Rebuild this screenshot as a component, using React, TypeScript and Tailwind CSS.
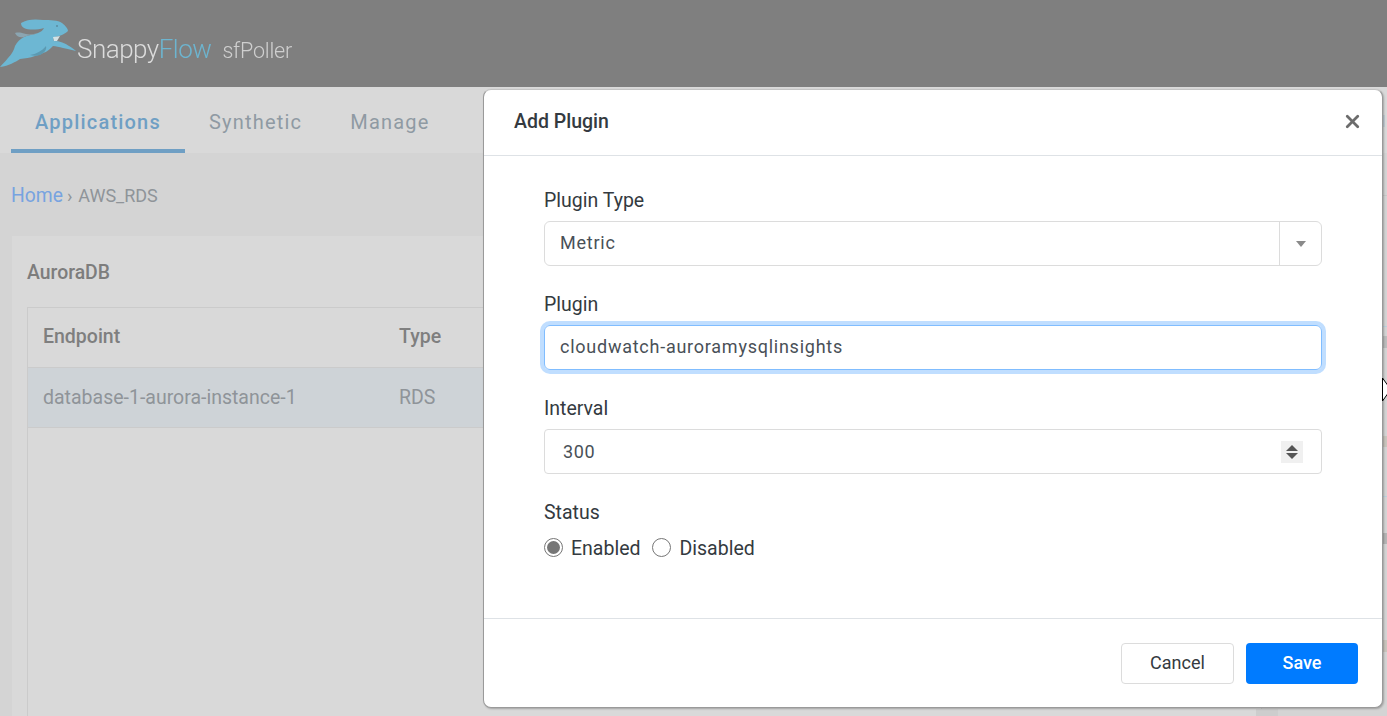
import { X } from "lucide-react";

function Logo() {
  return (
    <div className="flex items-end">
      <svg width="80" height="70" viewBox="0 0 80 70" className="shrink-0 blur-[0.5px]">
        <path d="M21 23 C27 19 36 19 43 20 C50 20 58 20 62 23 C66 26 68 29 68 31 C66 33 61 36 55 37 C53 38 53 40 54 41 C60 41 65 43 69 46 C72 48 74 49 76 51 C72 50 68 49 63 48 C59 47 56 46 53 46 C50 49 47 52 43 53 C40 55 37 55 35 56 C30 58 25 58 20 59 C15 62 9 66 0 67 C2 64 5 62 8 58 C12 54 14 50 15 46 C17 42 20 39 24 37 C28 35 33 35 38 33 C41 32 43 30 44 28 C37 30 28 30 24 28 C22 27 21 25 21 23 Z" fill="#6db7d3" />
        <path d="M15 33 C19 32 22 33 26 34 C30 35 34 34 38 33 C33 35 28 35 24 37 C20 38 17 37 15 33 Z" fill="#8ba5b1" />
        <path d="M30 55 C36 54 42 51 46 46 C47 50 44 53 40 55 C37 56 33 56 30 55 Z" fill="#5c9ab2" />
        <path d="M53 37 C56 37 59 36 60 36 L57 41 L54 41 Z" fill="#d4e2e5" />
        <circle cx="57" cy="26" r="0.8" fill="#4c6f7e" />
      </svg>
      <span className="font-light text-[26px] leading-none tracking-[-0.5px] text-[#dcdcdc] ml-[-3px] mb-[8px] blur-[0.3px]">
        Snappy<span className="text-[#6db5d0]">Flow</span>
      </span>
      <span className="font-light text-[21.5px] leading-none tracking-[-0.2px] text-[#cfcfcf] ml-[11px] mb-[9px] blur-[0.3px]">
        sfPoller
      </span>
    </div>
  );
}

function Field({ label, children }: { label: string; children: React.ReactNode }) {
  return (
    <div className="h-[104px]">
      <div className="text-[19.5px] leading-[24px] text-[#343a40] pt-[2px] h-[34px]">{label}</div>
      {children}
    </div>
  );
}

export default function App() {
  return (
    <div className="relative w-[1387px] h-[716px] overflow-hidden bg-[#d4d4d4] font-['Roboto',sans-serif]">
      <header className="h-[87px] bg-[#7f7f7f] flex items-end">
        <div className="pb-[17px]">
          <Logo />
        </div>
      </header>

      <nav className="h-[66px] bg-[#d9d9d9] flex items-end pl-[11px] text-[20px] tracking-[1.2px] text-[#8f9aa3]">
        <div className="w-[174px] h-[66px] pt-[22px] leading-[26px] text-center font-medium text-[#6f9fc4] border-b-4 border-[#6f9fc4]">
          Applications
        </div>
        <div className="h-[66px] pt-[22px] leading-[26px] ml-[24px]">Synthetic</div>
        <div className="h-[66px] pt-[22px] leading-[26px] ml-[48px]">Manage</div>
      </nav>

      <div className="h-[83px] pl-[11px] pt-[31px] text-[19.3px] leading-[24px] text-[#8f9499] flex">
        <span className="text-[#77a3e0]">Home</span>
        <span className="ml-[4px] mr-[6px] text-[18px]">›</span>
        <span className="text-[18px]">AWS_RDS</span>
      </div>

      <section className="ml-[12px] w-[1250px] h-[480px] overflow-hidden bg-[#d9d9d9] pl-[15px]">
        <h2 className="h-[71px] pt-[24px] text-[19.4px] leading-[26px] font-medium text-[#7d7d7d]">AuroraDB</h2>
        <div className="h-[420px] border border-[#cbcbcb]">
          <div className="flex h-[60px] items-center pb-[2px] text-[19.5px] font-medium text-[#7f7f7f] border-b border-[#cbcbcb]">
            <div className="w-[371px] pl-[15px]">Endpoint</div>
            <div>Type</div>
          </div>
          <div className="flex h-[60px] items-center text-[19.5px] text-[#8f9499] bg-[#ced3d7] border-b border-[#cbcbcb]">
            <div className="w-[371px] pl-[15px]">database-1-aurora-instance-1</div>
            <div>RDS</div>
          </div>
        </div>
      </section>

      {/* bits of the page showing past the modal's right edge */}
      <span className="absolute left-[1383px] top-[115px] w-[2px] h-[12px] bg-[#c5ced6]" />
      <span className="absolute left-[1383px] top-[195px] w-[4px] h-[1px] bg-[#c8c8c8]" />
      <span className="absolute left-[1383px] top-[326px] w-[4px] h-[1px] bg-[#bcd0de]" />
      <span className="absolute left-[1383px] top-[336px] w-[4px] h-[12px] bg-[#bdbdbd]" />
      <span className="absolute left-[1383px] top-[436px] w-[4px] h-[11px] bg-[#c9c5bd]" />
      <span className="absolute left-[1383px] top-[496px] w-[4px] h-[1px] bg-[#bcd0de]" />
      <span className="absolute left-[1383px] top-[533px] w-[4px] h-[11px] bg-[#b5b5b5]" />
      <span className="absolute left-[1383px] top-[640px] w-[4px] h-[12px] bg-[#c9c5bd]" />
      <span className="absolute left-[1256px] top-[709px] w-[22px] h-[7px] bg-[#cdcdcd]" />

      <div className="absolute left-[483px] top-[89px] w-[900px] h-[619px] bg-white rounded-[8px] border border-[#9a9a9a] border-t-[#c4c4c4] flex flex-col shadow-[1px_1px_2px_rgba(0,0,0,0.25)]">
        <div className="h-[66px] shrink-0 flex items-center justify-between pb-[2px] pl-[30px] pr-[19px] border-b border-[#dee2e6]">
          <span className="text-[19.5px] font-medium text-[#343a40]">Add Plugin</span>
          <X size={21} strokeWidth={3.2} className="text-[#6c6c6c]" />
        </div>

        <div className="h-[463px] shrink-0 border-b border-[#dee2e6] pl-[60px] pr-[60px] pt-[31px]">
          <Field label="Plugin Type">
            <div className="w-[778px] h-[45px] flex border border-[#dcdcdc] rounded-[6px] text-[18px] tracking-[0.75px] text-[#495057]">
              <div className="flex-1 pl-[15px] leading-[41px]">Metric</div>
              <div className="w-[42px] border-l border-[#dcdcdc] flex items-center justify-center">
                <span className="w-0 h-0 border-x-[5.5px] border-x-transparent border-t-[6px] border-t-[#8a8a8a]" />
              </div>
            </div>
          </Field>

          <Field label="Plugin">
            <div className="w-[778px] h-[45px] border border-[#80bdff] rounded-[6px] shadow-[0_0_0_4px_#c0deff] text-[18px] tracking-[0.75px] text-[#495057] pl-[15px] leading-[41px]">
              cloudwatch-auroramysqlinsights
            </div>
          </Field>

          <Field label="Interval">
            <div className="w-[778px] h-[45px] border border-[#dcdcdc] rounded-[4px] text-[18px] tracking-[0.6px] text-[#495057] pl-[18px] pr-[18px] flex items-center justify-between">
              <span>300</span>
              <span className="w-[22px] h-[22px] bg-[#f0f0f0] flex flex-col items-center justify-center gap-[2px]">
                <span className="w-0 h-0 border-x-[6px] border-x-transparent border-b-[6px] border-b-[#555555]" />
                <span className="w-0 h-0 border-x-[6px] border-x-transparent border-t-[6px] border-t-[#555555]" />
              </span>
            </div>
          </Field>

          <div className="text-[19.5px] leading-[24px] text-[#343a40] pt-[2px] h-[38px]">Status</div>
          <div className="flex items-center text-[19.5px] leading-[24px] text-[#343a40] h-[24px]">
            <span className="w-[19px] h-[19px] mb-[3px] rounded-full border border-[#767676] flex items-center justify-center mr-[8px]">
              <span className="w-[13px] h-[13px] rounded-full bg-[#767676]" />
            </span>
            <span className="mr-[11px]">Enabled</span>
            <span className="w-[19px] h-[19px] mb-[3px] rounded-full border border-[#767676] mr-[9px]" />
            <span>Disabled</span>
          </div>
        </div>

        <div className="flex-1 flex items-center justify-end gap-[12px] pr-[24px]">
          <button className="w-[113px] h-[41px] pb-[2px] rounded-[4px] border border-[#dcdcdc] bg-white text-[18px] text-[#343a40]">Cancel</button>
          <button className="w-[112px] h-[41px] pb-[2px] rounded-[4px] bg-[#007bff] text-[18px] font-medium text-white">Save</button>
        </div>
      </div>

      <svg width="6" height="26" viewBox="0 0 6 26" className="absolute left-[1382px] top-[377px]">
        <path d="M0.5 1 L5.5 8 L5.5 17 L0.5 24 Z" fill="white" stroke="black" strokeWidth="1" />
      </svg>
    </div>
  );
}
